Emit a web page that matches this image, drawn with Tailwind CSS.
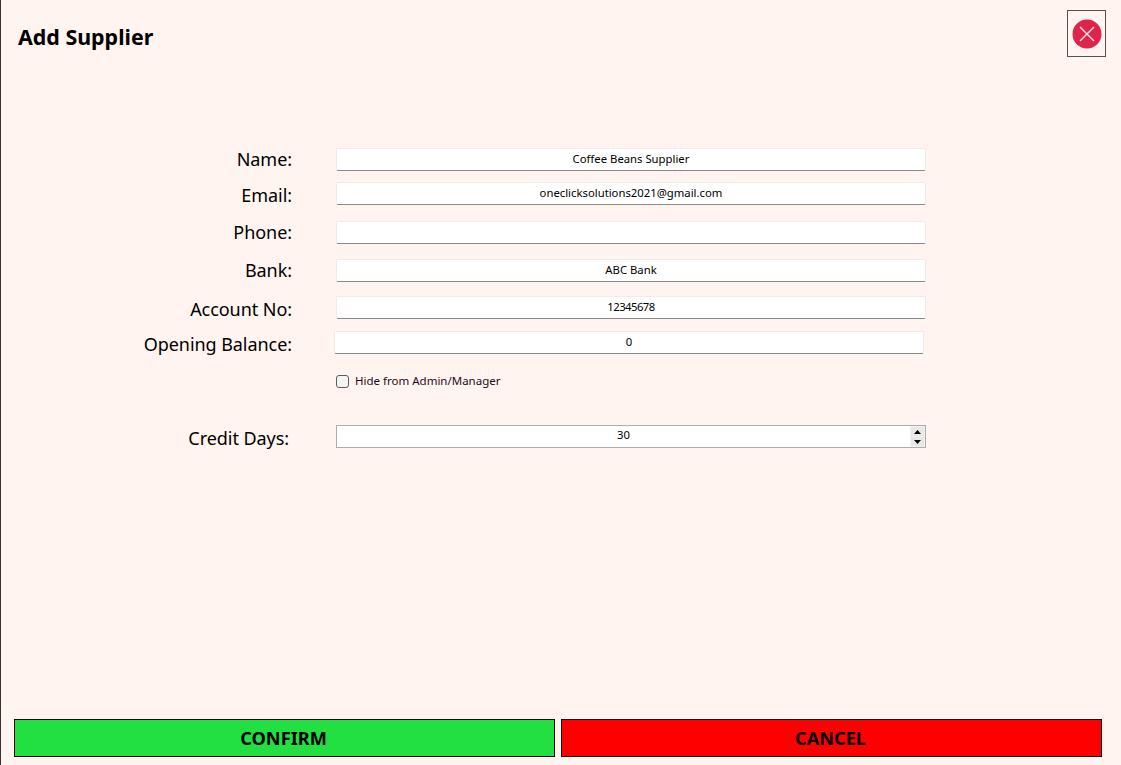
<!DOCTYPE html>
<html>
<head>
  <title>Add Supplier</title>
  <script src="https://cdn.jsdelivr.net/npm/@tailwindcss/browser@4"></script>
</head>
<body class="m-0 overflow-hidden">
  <div class="flex flex-col h-[765px] w-[1121px] bg-[#fff4ef] border-l border-l-[#333333] font-['Noto_Sans',sans-serif] text-black">

    <!-- header -->
    <div class="flex justify-between items-start h-[148px] pl-[17px] pr-[15px] pt-[10px]">
      <h1 class="mt-[12px] text-[21.4px] leading-[30px] font-bold">Add Supplier</h1>
      <button class="flex justify-center items-start w-[39px] h-[47px] pt-[8px] border border-[#5a5050]">
        <svg width="30" height="30" viewBox="0 0 30 30">
          <circle cx="15" cy="15" r="14.5" fill="#de244a"/>
          <path d="M8 8L22 22M22 8L8 22" stroke="#fde8e8" stroke-width="1.4" fill="none"/>
        </svg>
      </button>
    </div>

    <!-- form -->
    <div class="flex items-center h-[23px]">
      <label class="w-[291px] text-right text-[18px] leading-[23px] tracking-[-0.06px]">Name:</label>
      <input class="ml-[44px] w-[590px] h-[23px] pb-[2px] bg-white rounded-[2px] border border-[#f0ebe8] border-b-[#8a8a8a] text-center text-[11.3px]" value="Coffee Beans Supplier">
    </div>
    <div class="flex items-center h-[23px] mt-[11px]">
      <label class="w-[291px] pt-[4px] text-right text-[18px] leading-[23px] tracking-[-0.06px]">Email:</label>
      <input class="ml-[44px] w-[590px] h-[23px] pb-[2px] bg-white rounded-[2px] border border-[#f0ebe8] border-b-[#8a8a8a] text-center text-[11.3px]" value="oneclicksolutions2021@gmail.com">
    </div>
    <div class="flex items-center h-[23px] mt-[16px]">
      <label class="w-[291px] text-right text-[18px] leading-[23px] tracking-[-0.06px]">Phone:</label>
      <input class="ml-[44px] w-[590px] h-[23px] pb-[2px] bg-white rounded-[2px] border border-[#f0ebe8] border-b-[#8a8a8a] text-center text-[11.3px]" value="">
    </div>
    <div class="flex items-center h-[23px] mt-[15px]">
      <label class="w-[291px] text-right text-[18px] leading-[23px] tracking-[-0.06px]">Bank:</label>
      <input class="ml-[44px] w-[590px] h-[23px] pb-[2px] bg-white rounded-[2px] border border-[#f0ebe8] border-b-[#8a8a8a] text-center text-[11.3px]" value="ABC Bank">
    </div>
    <div class="flex items-center h-[23px] mt-[14px]">
      <label class="w-[291px] pt-[4px] text-right text-[18px] leading-[23px] tracking-[-0.06px]">Account No:</label>
      <input class="ml-[44px] w-[590px] h-[23px] pb-[2px] bg-white rounded-[2px] border border-[#f0ebe8] border-b-[#8a8a8a] text-center text-[11.3px] tracking-[-0.55px]" value="12345678">
    </div>
    <div class="flex items-center h-[23px] mt-[12px]">
      <label class="w-[291px] pt-[4px] text-right text-[18px] leading-[23px] tracking-[-0.06px]">Opening Balance:</label>
      <input class="ml-[42px] w-[590px] h-[23px] pb-[2px] bg-white rounded-[2px] border border-[#f0ebe8] border-b-[#8a8a8a] text-center text-[11.3px]" value="0">
    </div>

    <div class="flex items-center h-[14px] mt-[20px] ml-[335px]">
      <span class="w-[13px] h-[13px] bg-[#f4f4f4] border border-[#5c5c5c] rounded-[3px]"></span>
      <span class="ml-[6px] text-[11.5px] leading-[14px] text-[#2a0a1a]">Hide from Admin/Manager</span>
    </div>

    <div class="flex items-center h-[23px] mt-[37px]">
      <label class="w-[288px] pt-[4px] text-right text-[18px] leading-[23px] tracking-[-0.06px]">Credit Days:</label>
      <div class="flex items-center ml-[47px] w-[590px] h-[23px] bg-white border border-[#adadad]">
        <span class="flex-1 text-center text-[11.3px] leading-[17px] pb-[4px]">30</span>
        <div class="flex flex-col justify-center gap-[1px] w-[15px] h-[21px] pl-[1px] bg-[#f0f0f0]">
          <span class="flex justify-center items-center w-[13px] h-[9px] bg-[#e8e8e8]">
            <svg width="7" height="4" viewBox="0 0 7 4"><path d="M3.5 0L7 4H0Z" fill="#000"/></svg>
          </span>
          <span class="flex justify-center items-center w-[13px] h-[9px] bg-[#e8e8e8]">
            <svg width="7" height="4" viewBox="0 0 7 4"><path d="M0 0H7L3.5 4Z" fill="#000"/></svg>
          </span>
        </div>
      </div>
    </div>

    <!-- footer buttons -->
    <div class="flex gap-[6px] mt-auto mb-[8px] ml-[13px]">
      <button class="w-[541px] h-[38px] pr-[2px] bg-[#22df42] border border-black text-[18.2px] font-bold leading-[34px]">CONFIRM</button>
      <button class="w-[541px] h-[38px] pr-[2px] bg-[#ff0000] border border-black text-[18.2px] font-bold leading-[34px]">CANCEL</button>
    </div>
  </div>
</body>
</html>
